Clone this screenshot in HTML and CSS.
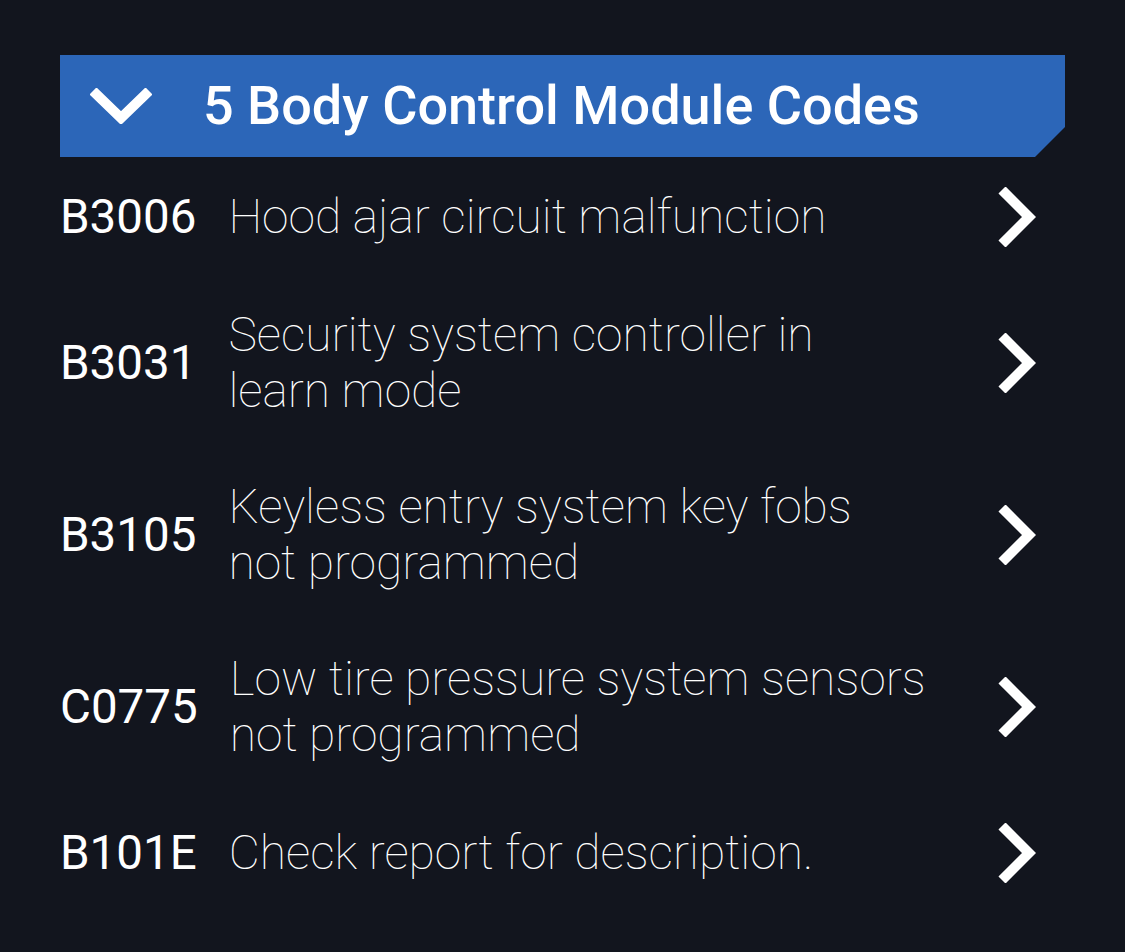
FILE: index.html
```html
<!DOCTYPE html>
<html lang="en">
<head>
<meta charset="utf-8">
<title>Body Control Module Codes</title>
<link rel="stylesheet" href="styles.css">
</head>
<body>
<main class="panel">
  <header class="section-head">
    <svg class="chev-down" viewBox="0 0 62 36" width="62" height="36" aria-hidden="true">
      <polyline points="3,3 31,30 59,3" fill="none" stroke="#fff" stroke-width="10" stroke-linejoin="miter"/>
    </svg>
    <h1 class="section-title">5 Body Control Module Codes</h1>
  </header>
  <ul class="code-list">
    <li class="code-row">
      <span class="code">B3006</span>
      <span class="desc">Hood ajar circuit malfunction</span>
      <svg class="chev-right" viewBox="0 0 38 60" width="38" height="60" aria-hidden="true"><polyline points="4,3 31,30 4,57" fill="none" stroke="#fff" stroke-width="10"/></svg>
    </li>
    <li class="code-row">
      <span class="code">B3031</span>
      <span class="desc">Security system controller in<br>learn mode</span>
      <svg class="chev-right" viewBox="0 0 38 60" width="38" height="60" aria-hidden="true"><polyline points="4,3 31,30 4,57" fill="none" stroke="#fff" stroke-width="10"/></svg>
    </li>
    <li class="code-row">
      <span class="code">B3105</span>
      <span class="desc">Keyless entry system key fobs not programmed</span>
      <svg class="chev-right" viewBox="0 0 38 60" width="38" height="60" aria-hidden="true"><polyline points="4,3 31,30 4,57" fill="none" stroke="#fff" stroke-width="10"/></svg>
    </li>
    <li class="code-row">
      <span class="code">C0775</span>
      <span class="desc">Low tire pressure system sensors not programmed</span>
      <svg class="chev-right" viewBox="0 0 38 60" width="38" height="60" aria-hidden="true"><polyline points="4,3 31,30 4,57" fill="none" stroke="#fff" stroke-width="10"/></svg>
    </li>
    <li class="code-row">
      <span class="code">B101E</span>
      <span class="desc">Check report for description.</span>
      <svg class="chev-right" viewBox="0 0 38 60" width="38" height="60" aria-hidden="true"><polyline points="4,3 31,30 4,57" fill="none" stroke="#fff" stroke-width="10"/></svg>
    </li>
  </ul>
</main>
</body>
</html>
```
FILE: styles.css
```css
html, body {
  margin: 0;
  padding: 0;
  background: #12151e;
  color: #fff;
  font-family: Roboto, "Liberation Sans", sans-serif;
}
.panel {
  padding: 55px 60px 0 60px;
}
.section-head {
  display: flex;
  align-items: center;
  height: 102px;
  background: #2c66b8;
  padding-left: 30px;
  clip-path: polygon(0 0, 100% 0, 100% 72px, calc(100% - 30px) 100%, 0 100%);
}
.chev-down {
  display: block;
  flex: none;
}
.section-title {
  margin: 0 0 0 51px;
  font-size: 54px;
  font-weight: 500;
  line-height: 1;
  letter-spacing: 0;
}
.code-list {
  list-style: none;
  margin: 0;
  padding: 0;
}
.code-row {
  display: flex;
  align-items: center;
  padding: 30px 0 30px;
}
.code {
  flex: none;
  font-size: 47.5px;
  font-weight: 400;
  line-height: 56px;
  margin-right: 32px;
}
.desc {
  flex: 1;
  max-width: 699px;
  font-family: "Roboto Thin", Roboto, "Liberation Sans", sans-serif;
  font-size: 48px;
  font-weight: 100;
  line-height: 56px;
}
.chev-right {
  display: block;
  flex: none;
  margin-left: auto;
  margin-right: 29px;
}
```
